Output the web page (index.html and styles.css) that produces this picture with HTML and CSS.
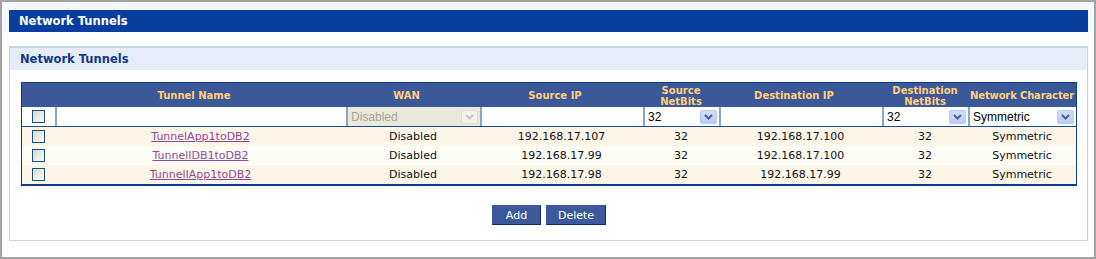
FILE: index.html
```html
<!DOCTYPE html>
<html lang="en">
<head>
    <meta charset="UTF-8">
    <title>Network Tunnels</title>
    <link rel="stylesheet" href="styles.css">
</head>
<body>
    <div class="frame">
        <div class="page-bar">Network Tunnels</div>

        <div class="panel">
            <div class="panel-head">Network Tunnels</div>
            <div class="panel-body">
                <div class="grid">
                    <div class="row head">
                        <div class="th"></div>
                        <div class="th shift">Tunnel Name</div>
                        <div class="th shift">WAN</div>
                        <div class="th shift">Source IP</div>
                        <div class="th">Source<br>NetBits</div>
                        <div class="th shift">Destination IP</div>
                        <div class="th">Destination<br>NetBits</div>
                        <div class="th tight">Network Character</div>
                    </div>

                    <div class="row filter">
                        <div class="cell-check"><span class="check"></span></div>
                        <div class="fcell"></div>
                        <div class="fcell disabled">
                            <span class="sel-text">Disabled</span>
                            <span class="drop"><svg width="9" height="6" viewBox="0 0 9 6"><path d="M1 1 L4.5 4.5 L8 1" fill="none" stroke="currentColor" stroke-width="2"/></svg></span>
                        </div>
                        <div class="fcell"></div>
                        <div class="fcell">
                            <span class="sel-text">32</span>
                            <span class="drop"><svg width="9" height="6" viewBox="0 0 9 6"><path d="M1 1 L4.5 4.5 L8 1" fill="none" stroke="currentColor" stroke-width="2"/></svg></span>
                        </div>
                        <div class="fcell"></div>
                        <div class="fcell">
                            <span class="sel-text">32</span>
                            <span class="drop"><svg width="9" height="6" viewBox="0 0 9 6"><path d="M1 1 L4.5 4.5 L8 1" fill="none" stroke="currentColor" stroke-width="2"/></svg></span>
                        </div>
                        <div class="fcell">
                            <span class="sel-text">Symmetric</span>
                            <span class="drop"><svg width="9" height="6" viewBox="0 0 9 6"><path d="M1 1 L4.5 4.5 L8 1" fill="none" stroke="currentColor" stroke-width="2"/></svg></span>
                        </div>
                    </div>

                    <div class="row data odd">
                        <div class="cell-check"><span class="check"></span></div>
                        <div class="td"><a href="#">TunnelApp1toDB2</a></div>
                        <div class="td">Disabled</div>
                        <div class="td">192.168.17.107</div>
                        <div class="td">32</div>
                        <div class="td">192.168.17.100</div>
                        <div class="td">32</div>
                        <div class="td">Symmetric</div>
                    </div>
                    <div class="row data even">
                        <div class="cell-check"><span class="check"></span></div>
                        <div class="td"><a href="#">TunnelIDB1toDB2</a></div>
                        <div class="td">Disabled</div>
                        <div class="td">192.168.17.99</div>
                        <div class="td">32</div>
                        <div class="td">192.168.17.100</div>
                        <div class="td">32</div>
                        <div class="td">Symmetric</div>
                    </div>
                    <div class="row data odd">
                        <div class="cell-check"><span class="check"></span></div>
                        <div class="td"><a href="#">TunnelIApp1toDB2</a></div>
                        <div class="td">Disabled</div>
                        <div class="td">192.168.17.98</div>
                        <div class="td">32</div>
                        <div class="td">192.168.17.99</div>
                        <div class="td">32</div>
                        <div class="td">Symmetric</div>
                    </div>
                </div>

                <div class="actions">
                    <button class="btn add">Add</button>
                    <button class="btn del">Delete</button>
                </div>
            </div>
        </div>
    </div>
</body>
</html>
```

FILE: styles.css
```css
body {
    margin: 0;
    font-family: "DejaVu Sans", Verdana, sans-serif;
    font-size: 11px;
    color: #000;
    background: #fff;
}
.frame {
    box-sizing: border-box;
    width: 1096px;
    height: 259px;
    border: 2px solid #a3a3a3;
    background: linear-gradient(#f4f8fe 30px, #fff 30px);
    padding-top: 8px;
}
.page-bar {
    height: 22px;
    line-height: 22px;
    margin: 0 6px 0 7px;
    padding-left: 10px;
    background: #083f9f;
    color: #fff;
    font-size: 11.5px;
    font-weight: bold;
}
.panel {
    margin: 14px 6px 0 7px;
    border: 1px solid #c3d4ec;
    border-top-width: 2px;
}
.panel-head {
    height: 22px;
    line-height: 22px;
    padding-left: 10px;
    background: #e6edf9;
    color: #11398b;
    font-size: 11.5px;
    font-weight: bold;
}
.panel-body {
    padding: 12px 10px 15px 11px;
    background: #fff;
}

/* tunnel table */
.grid {
    border: 1px solid #0e3c8c;
    border-bottom-width: 2px;
}
.row {
    display: grid;
    grid-template-columns: 33px 291px 134px 163px 76px 163px 86px 108px;
}
.head {
    height: 24px;
    background: #3b5998;
}
.th {
    display: flex;
    align-items: center;
    justify-content: center;
    text-align: center;
    color: #ffcf7a;
    font-size: 10px;
    font-weight: bold;
    line-height: 11px;
    white-space: nowrap;
    padding-top: 1px;
}
.th.shift {
    padding-right: 13px;
}
.th.tight {
    letter-spacing: -0.15px;
}
.filter {
    height: 19px;
    background: #fff;
    border-bottom: 1px solid #1b4a8c;
}
.cell-check {
    display: flex;
    align-items: center;
    justify-content: center;
}
.check {
    box-sizing: border-box;
    width: 13px;
    height: 13px;
    border: 1px solid #1c5180;
    background: linear-gradient(135deg, #d8d8d2, #fbfbf9);
}
.fcell {
    display: flex;
    align-items: center;
    border-left: 2px solid #8ea6c6;
    background: #fff;
    font-family: "Liberation Sans", Arial, sans-serif;
    font-size: 12px;
}
.sel-text {
    padding-left: 3px;
    flex: 1;
}
.drop {
    box-sizing: border-box;
    width: 17px;
    height: 14px;
    margin-right: 2px;
    display: flex;
    align-items: center;
    justify-content: center;
    background: linear-gradient(#d0defd, #b9cdf8);
    border: 1px solid #b7c9f0;
    border-radius: 2px;
    color: #4d6185;
}
.fcell.disabled {
    background: #ebe9dc;
    color: #a7a496;
}
.fcell.disabled .drop {
    background: #f3f2ec;
    border-color: #e0ded2;
    color: #c9c7bb;
}
.data {
    height: 19px;
}
.odd {
    background: #fcf6e9;
}
.even {
    background: #fdfdf8;
}
.td {
    display: flex;
    align-items: center;
    justify-content: center;
    white-space: nowrap;
    color: #111;
}
.td a {
    color: #944797;
}

/* buttons */
.actions {
    display: flex;
    justify-content: center;
    gap: 5px;
    margin-top: 19px;
}
.btn {
    box-sizing: border-box;
    height: 20px;
    padding: 0;
    background: #3c5a9b;
    color: #fff;
    font-family: "DejaVu Sans", Verdana, sans-serif;
    font-size: 11px;
    border: 1px solid #3c5a9b;
    border-right-color: #152c62;
    border-bottom-color: #152c62;
    cursor: pointer;
}
.btn.add {
    width: 49px;
}
.btn.del {
    width: 60px;
}
```
